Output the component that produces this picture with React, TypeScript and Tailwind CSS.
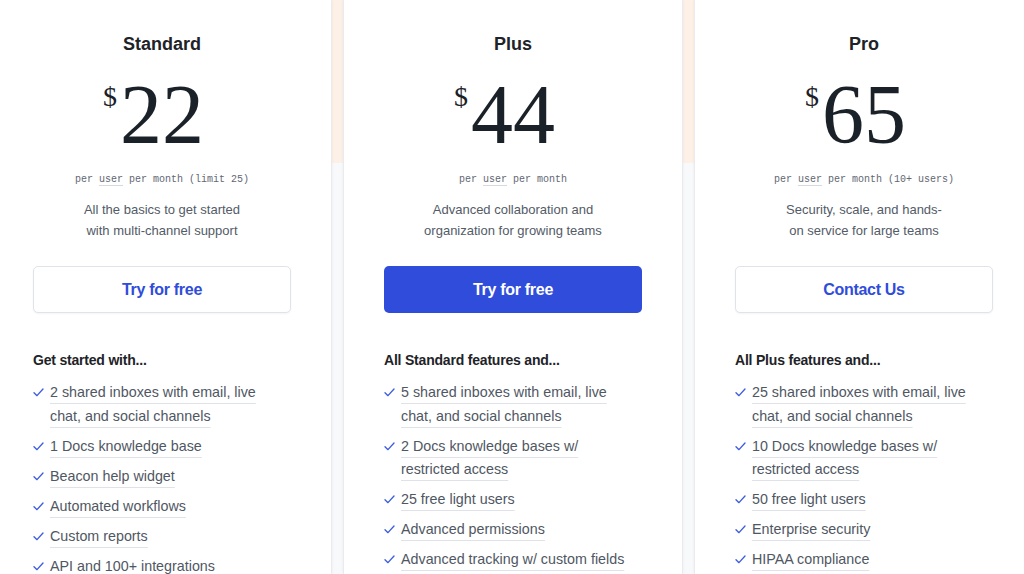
import React from "react";

type Plan = {
  name: string;
  price: string;
  note: string;
  blurb: string[];
  cta: string;
  primary?: boolean;
  heading: string;
  features: string[][];
};

const plans: Plan[] = [
  {
    name: "Standard",
    price: "22",
    note: "per month (limit 25)",
    blurb: ["All the basics to get started", "with multi-channel support"],
    cta: "Try for free",
    heading: "Get started with...",
    features: [
      ["2 shared inboxes with email, live", "chat, and social channels"],
      ["1 Docs knowledge base"],
      ["Beacon help widget"],
      ["Automated workflows"],
      ["Custom reports"],
      ["API and 100+ integrations"],
    ],
  },
  {
    name: "Plus",
    price: "44",
    note: "per month",
    blurb: ["Advanced collaboration and", "organization for growing teams"],
    cta: "Try for free",
    primary: true,
    heading: "All Standard features and...",
    features: [
      ["5 shared inboxes with email, live", "chat, and social channels"],
      ["2 Docs knowledge bases w/", "restricted access"],
      ["25 free light users"],
      ["Advanced permissions"],
      ["Advanced tracking w/ custom fields"],
    ],
  },
  {
    name: "Pro",
    price: "65",
    note: "per month (10+ users)",
    blurb: ["Security, scale, and hands-", "on service for large teams"],
    cta: "Contact Us",
    heading: "All Plus features and...",
    features: [
      ["25 shared inboxes with email, live", "chat, and social channels"],
      ["10 Docs knowledge bases w/", "restricted access"],
      ["50 free light users"],
      ["Enterprise security"],
      ["HIPAA compliance"],
    ],
  },
];

function Check() {
  return (
    <svg viewBox="0 0 12 10" className="w-[11px] h-[9px] shrink-0 mt-[7px]" fill="none">
      <path d="M1 5.2 L4.3 8.5 L11 1.2" stroke="#3d5ce0" strokeWidth="1.5" strokeLinecap="round" strokeLinejoin="round" />
    </svg>
  );
}

function PlanCard({ plan }: { plan: Plan }) {
  return (
    <div className="w-[340px] shrink-0 bg-white border-x border-[#e9ebef] shadow-[0_0_3px_rgba(20,30,50,0.06)] px-10 pt-[32px] font-['Liberation_Sans',Arial,sans-serif]">
      <h2 className="text-center text-[18px] leading-6 font-bold text-[#1e2328]">{plan.name}</h2>

      <div className="mt-[17px] flex justify-center">
        <span className="relative font-['Liberation_Serif',serif] text-[84px] leading-none text-[#1b2128]">
          <span className="absolute right-full mr-[3px] top-[10px] text-[28px] leading-none">$</span>
          {plan.price}
        </span>
      </div>

      <p className="mt-[15px] text-center font-['Liberation_Mono',monospace] text-[10px] leading-4 text-[#5f6773]">
        per <span className="underline decoration-[#d5d9e0] underline-offset-[3px]">user</span> {plan.note}
      </p>

      <p className="mt-[11px] text-center text-[13px] leading-[21px] text-[#535b67]">
        {plan.blurb[0]}
        <br />
        {plan.blurb[1]}
      </p>

      <button
        className={
          plan.primary
            ? "mt-[25px] w-full h-[47px] rounded-[5px] bg-[#2f4cdb] text-white text-[16px] font-bold tracking-[-0.3px]"
            : "mt-[25px] w-full h-[47px] rounded-[5px] bg-white border border-[#e0e3e9] shadow-[0_1px_2px_rgba(20,30,50,0.05)] text-[#2f4cdb] text-[16px] font-bold tracking-[-0.3px]"
        }
      >
        {plan.cta}
      </button>

      <h3 className="mt-[37px] text-[14px] leading-5 font-bold tracking-[-0.2px] text-[#1e2328]">{plan.heading}</h3>

      <ul className="mt-[11px] flex flex-col gap-[6.5px]">
        {plan.features.map((lines, i) => (
          <li key={i} className="flex gap-[6px]">
            <Check />
            <span className="text-[14.3px] leading-[23.5px] text-[#4f5763] whitespace-nowrap underline decoration-[#dfe2e8] decoration-1 underline-offset-[6px]">
              {lines.map((l, j) => (
                <React.Fragment key={j}>
                  {j > 0 && <br />}
                  {l}
                </React.Fragment>
              ))}
            </span>
          </li>
        ))}
      </ul>
    </div>
  );
}

export default function App() {
  return (
    <div className="w-full h-[574px] overflow-hidden bg-[linear-gradient(to_bottom,#fdf0e7_163px,#f8f9fa_163px)]">
      <div className="flex justify-center gap-[11px] h-full pl-[2px]">
        {plans.map((p) => (
          <PlanCard key={p.name} plan={p} />
        ))}
      </div>
    </div>
  );
}
